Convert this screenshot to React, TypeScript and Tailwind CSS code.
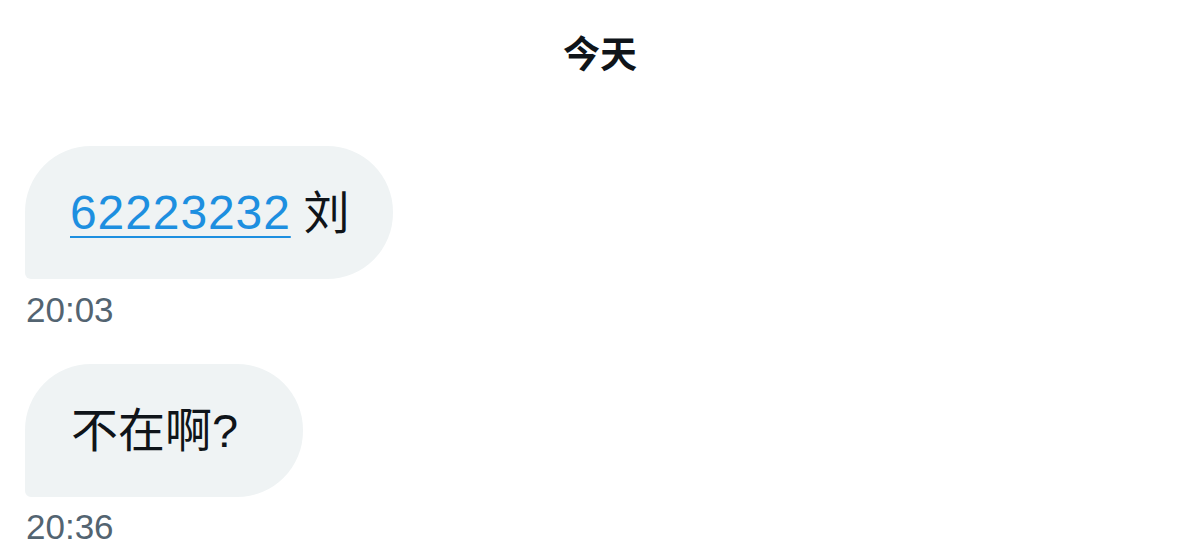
export default function App() {
  const font = { fontFamily: '"Liberation Sans", "Noto Sans CJK SC", sans-serif' };

  return (
    <div className="w-[1200px] h-[555px] bg-white overflow-hidden" style={font}>
      {/* Day divider */}
      <div className="h-[112px] pt-[36px] flex justify-center">
        <span className="text-[37px] leading-[40px] font-semibold text-[#0f1419]">今天</span>
      </div>

      <div className="flex flex-col items-start px-[25px]">
        {/* Message 1 */}
        <div className="mt-[34px] h-[133px] w-[368px] flex items-center pl-[45px] bg-[#eff3f4] rounded-[66px] rounded-bl-[6px] text-[48px] leading-[56px] text-[#0f1419]">
          <span className="text-[#1d8fe0] underline decoration-[2px] underline-offset-[7px] tracking-[0.9px]">62223232</span>
          <span className="text-[46px]">&nbsp;刘</span>
        </div>
        <div className="mt-[11px] text-[35px] leading-[40px] text-[#536471] pl-[1px]">20:03</div>

        {/* Message 2 */}
        <div className="mt-[34px] h-[133px] w-[278px] flex items-center pl-[46px] bg-[#eff3f4] rounded-[66px] rounded-bl-[6px] text-[47px] leading-[56px] text-[#0f1419]">
          <span>不在啊?</span>
        </div>
        <div className="mt-[10px] text-[35px] leading-[40px] text-[#536471] pl-[1px]">20:36</div>
      </div>
    </div>
  );
}
